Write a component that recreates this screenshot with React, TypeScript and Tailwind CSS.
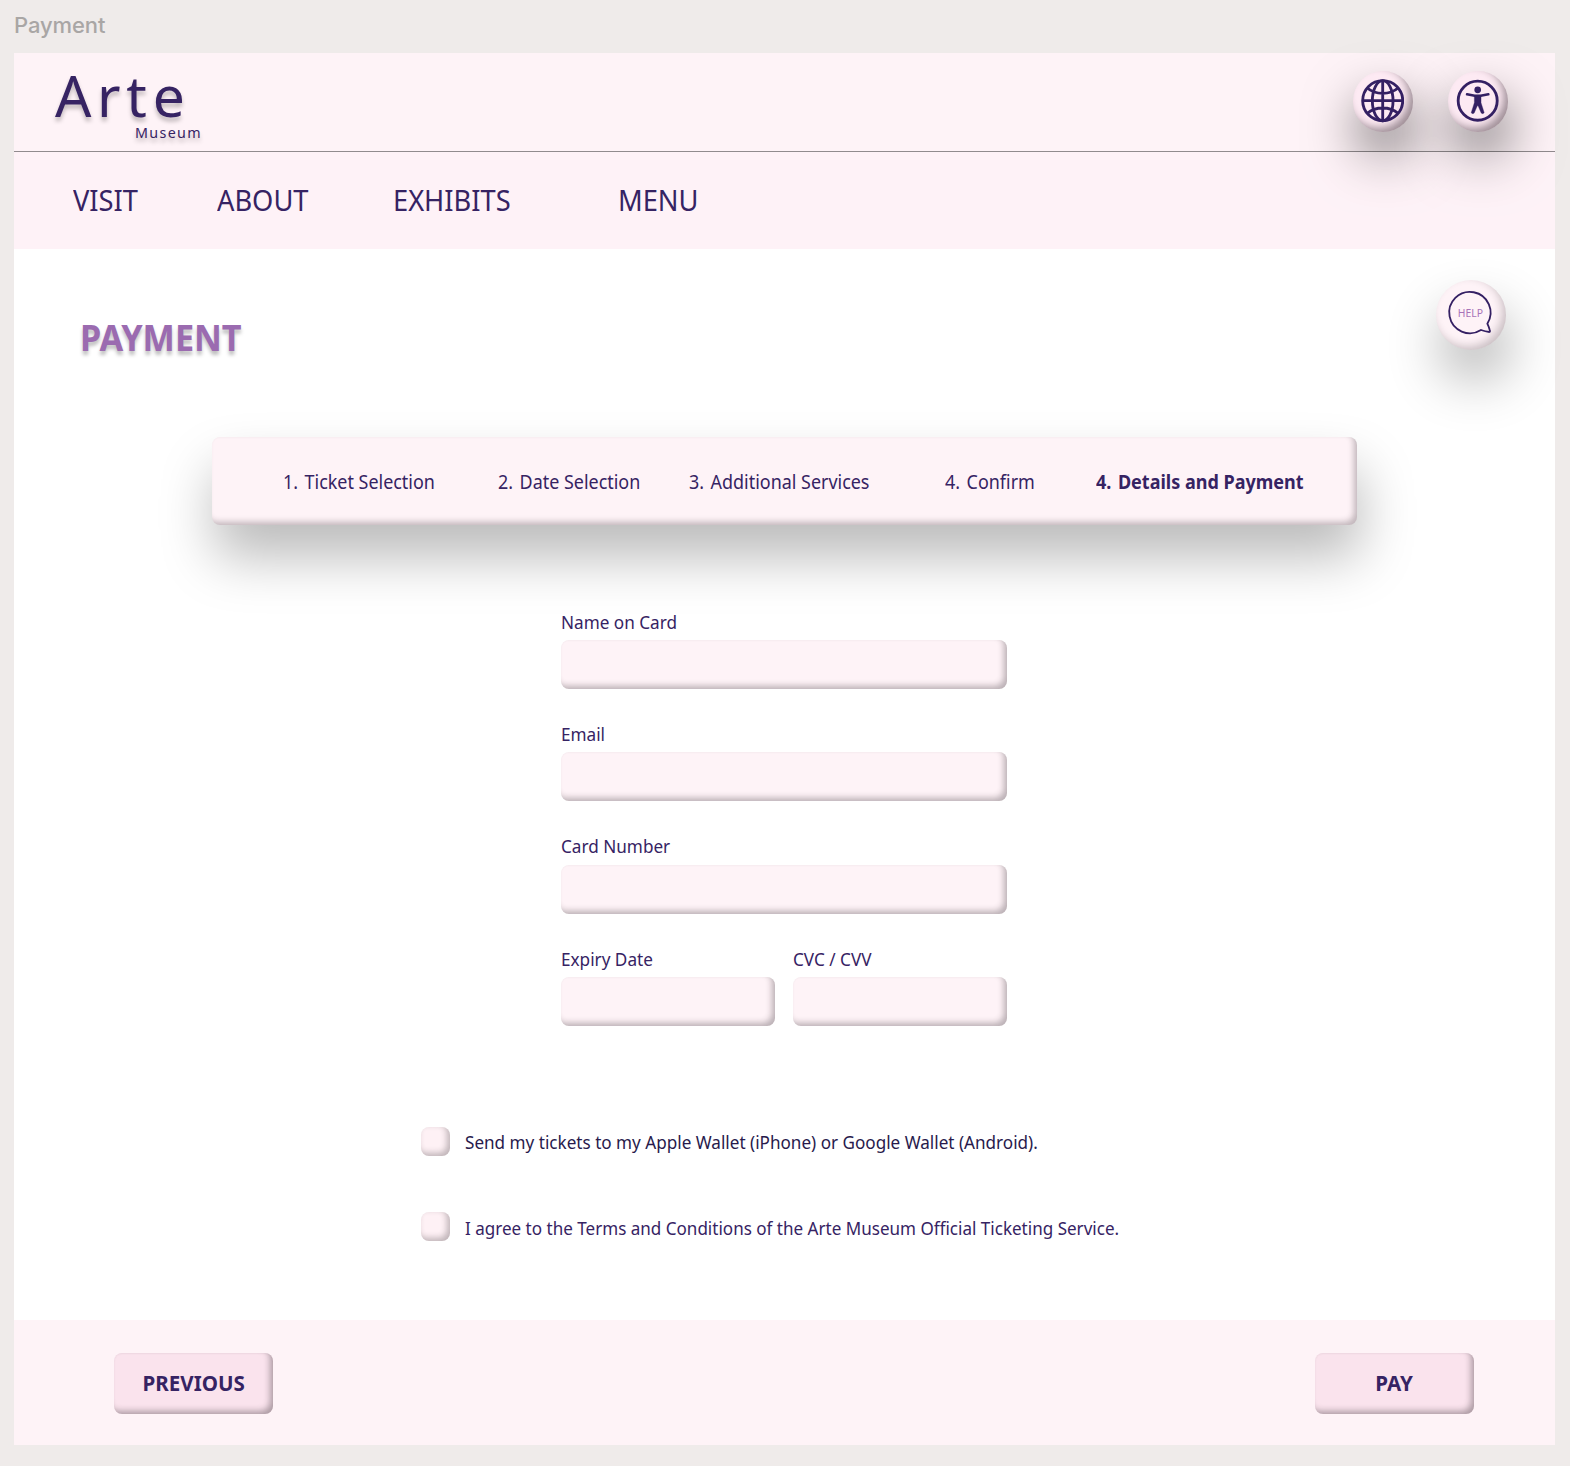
import type { ReactNode } from "react";

const raised = "shadow-[inset_-4px_-4px_6px_-1px_rgba(30,20,26,0.3),inset_0_1px_2px_rgba(0,0,0,0.02)]";

function Condensed({ children, className = "" }: { children: ReactNode; className?: string }) {
  return (
    <span className={`block origin-left scale-x-[0.943] whitespace-nowrap leading-none ${className}`}>
      {children}
    </span>
  );
}

function GlobeIcon() {
  return (
    <svg viewBox="0 0 130 130" className="h-[43.4px] w-[43.4px]" fill="none" stroke="#342063" strokeWidth="8.5">
      <circle cx="65" cy="65" r="60" />
      <ellipse cx="65" cy="65" rx="31" ry="60" />
      <path d="M65 5V125M5 65H125M19 27Q37 43 65 43T111 27M19 103Q37 87 65 87T111 103" />
    </svg>
  );
}

function AccessibilityIcon() {
  return (
    <svg viewBox="0 0 130 130" className="h-[43.4px] w-[43.4px]" fill="none" stroke="#342063">
      <circle cx="65" cy="65" r="58.5" strokeWidth="8.5" />
      <circle cx="65" cy="32.5" r="10" fill="#342063" stroke="none" />
      <path d="M33 46L56 50H74L97 46" strokeWidth="7.5" strokeLinecap="round" />
      <path d="M55 49H75V71L84.500 101Q80 106 75.500 102L66 80H64L54.500 102Q50 106 45.500 101L55 71Z" fill="#342063" strokeWidth="1" strokeLinejoin="round" />
    </svg>
  );
}

function RoundButton({ label, children }: { label: string; children: ReactNode }) {
  return (
    <button
      aria-label={label}
      className="flex h-[61px] w-[60px] items-center justify-center rounded-full bg-[#fdeaf3] pr-px pb-px shadow-[3px_27px_52px_rgba(0,0,0,0.5),inset_-5px_-5px_8px_-1px_rgba(30,20,26,0.42)]"
    >
      {children}
    </button>
  );
}

function Field({ label, className = "" }: { label: string; className?: string }) {
  return (
    <label className={`block ${className}`}>
      <Condensed className="text-[18.2px]">{label}</Condensed>
      <input className={`mt-[9px] block h-[49px] w-full rounded-lg bg-[#fef3f7] outline-none ${raised}`} />
    </label>
  );
}

function Step({ number, children, className = "" }: { number: string; children: ReactNode; className?: string }) {
  return (
    <li className={className}>
      <Condensed>
        <span className="mr-[2px]">{number}</span> {children}
      </Condensed>
    </li>
  );
}

function Consent({ children, className = "" }: { children: ReactNode; className?: string }) {
  return (
    <label className="flex h-[29px] items-center gap-[15px]">
      <input
        type="checkbox"
        className="h-[29px] w-[29px] shrink-0 appearance-none rounded-lg bg-[#fef1f5] shadow-[inset_-3px_-3px_6px_rgba(30,20,26,0.28)]"
      />
      <Condensed className={`mt-[3px] ${className}`}>{children}</Condensed>
    </label>
  );
}

function ActionButton({ children }: { children: ReactNode }) {
  return (
    <button
      className="flex h-[61px] w-[159px] items-center justify-center rounded-lg bg-[#fae3ed] text-[22px] font-bold shadow-[inset_-4px_-4px_6px_-1px_rgba(30,20,26,0.34),inset_0_1px_2px_rgba(0,0,0,0.04)]"
    >
      <span className="mb-[4px] block scale-x-[0.935] leading-none">{children}</span>
    </button>
  );
}

export default function App() {
  return (
    <div className="h-[1466px] w-[1570px] overflow-hidden bg-[#efebea] font-['Noto_Sans',sans-serif] text-[#362363]">
      <div className="h-[53px] pt-[13px] pl-[14px] font-['Inter',sans-serif] text-[22px] leading-[24px] font-[450] tracking-[-0.1px] text-[#a9a6a5]">
        Payment
      </div>
      <main className="ml-[14px] flex h-[1392px] w-[1541px] flex-col bg-white">
        <header className="h-[196px] bg-[#fef3f7]">
          <div className="flex h-[99px] justify-between border-b border-[#918b8e] pr-[47px] pl-[41px]">
            <div className="w-[160px] pt-[14px]">
              <div className="text-[57px] leading-none tracking-[5.7px] [text-shadow:0_4px_4px_rgba(0,0,0,0.25)]">Arte</div>
              <div className="mt-[1.500px] pl-[80px] text-[14.3px] leading-none tracking-[1.35px] [text-shadow:0_4px_4px_rgba(0,0,0,0.25)]">
                Museum
              </div>
            </div>
            <div className="flex gap-[35px] pt-[18px]">
              <RoundButton label="Language">
                <GlobeIcon />
              </RoundButton>
              <RoundButton label="Accessibility">
                <AccessibilityIcon />
              </RoundButton>
            </div>
          </div>
          <nav className="relative flex h-[97px] bg-[#fef3f7]/30 pt-[33.500px] pl-[59px] text-[28.9px]">
            <Condensed className="w-[144px]">VISIT</Condensed>
            <Condensed className="w-[176px]">ABOUT</Condensed>
            <Condensed className="w-[225px]">EXHIBITS</Condensed>
            <Condensed>MENU</Condensed>
          </nav>
        </header>

        <section className="flex h-[188px] items-start justify-between pr-[49px] pl-[66px]">
          <h1 className="pt-[70px] text-[36.3px] font-bold text-[#9b6bb0] [text-shadow:0_4px_4px_rgba(0,0,0,0.25)]">
            <Condensed>PAYMENT</Condensed>
          </h1>
          <button className="relative mt-[31px] h-[70px] w-[70px] rounded-full bg-[#fef3f7] shadow-[4px_30px_54px_rgba(0,0,0,0.3),inset_-4px_-4px_10px_-1px_rgba(30,20,26,0.24)]">
            <svg viewBox="108 60 210 210" className="h-[70px] w-[70px]" fill="none" stroke="#342063" strokeWidth="5.500">
              <path d="M262 191A62 62 0 1 0 243 210Q256 215 268 216Q271 215 269 209Q266 199 262 191Z" strokeLinejoin="round" />
            </svg>
            <span className="absolute top-[27px] left-[20.500px] scale-x-[0.943] text-[11px] leading-none text-[#a873b8]">HELP</span>
          </button>
        </section>

        <ol className="ml-[198px] flex h-[88px] w-[1145px] shrink-0 rounded-lg bg-[#fef3f7] pt-[36px] pl-[70.500px] text-[19px] shadow-[3px_32px_54px_rgba(0,0,0,0.27),inset_-4px_-4px_6px_-1px_rgba(30,20,26,0.27),inset_0_1px_2px_rgba(0,0,0,0.02)]">
          <Step number="1." className="w-[215px]">Ticket Selection</Step>
          <Step number="2." className="w-[191px]">Date Selection</Step>
          <Step number="3." className="w-[256px]">Additional Services</Step>
          <Step number="4." className="w-[151px]">Confirm</Step>
          <Step number="4." className="text-[19.1px] font-bold">Details and Payment</Step>
        </ol>

        <form className="mt-[88px] ml-[547px] grid w-[446px] grid-cols-2 gap-x-[18px] gap-y-[36px]">
          <Field label="Name on Card" className="col-span-2" />
          <Field label="Email" className="col-span-2" />
          <Field label="Card Number" className="col-span-2" />
          <Field label="Expiry Date" />
          <Field label="CVC / CVV" />
        </form>

        <div className="mt-auto mb-[79px] ml-[407px] flex flex-col gap-[56.500px]">
          <Consent className="text-[18.15px] text-[#281a4c]">Send my tickets to my Apple Wallet (iPhone) or Google Wallet (Android).</Consent>
          <Consent className="text-[18.08px]">I agree to the Terms and Conditions of the Arte Museum Official Ticketing Service.</Consent>
        </div>

        <footer className="flex h-[125px] shrink-0 items-start justify-between bg-[#fef3f7] pt-[33px] pr-[81px] pl-[100px]">
          <ActionButton>PREVIOUS</ActionButton>
          <ActionButton>PAY</ActionButton>
        </footer>
      </main>
    </div>
  );
}
